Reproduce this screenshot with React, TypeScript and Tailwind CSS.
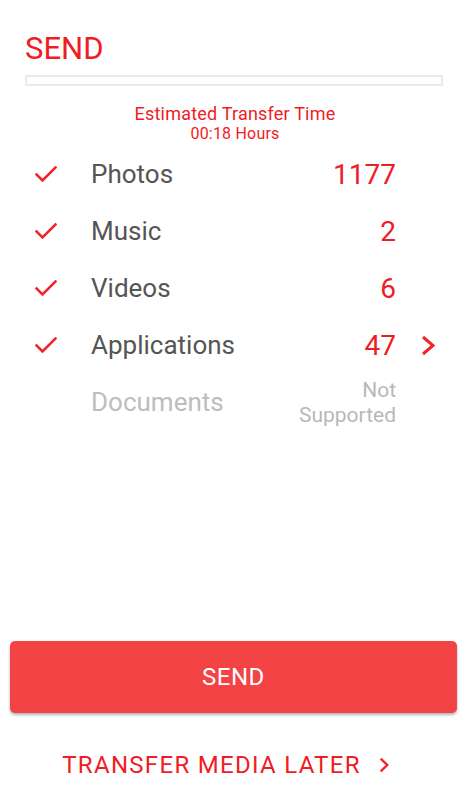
import React from "react";

const RED = "text-[#f01c24]";

function Check() {
  return (
    <svg width="22" height="17" viewBox="0 0 22 17" fill="none">
      <path d="M1.5 8.5 L7.5 14.5 L20.5 1.5" stroke="#f0242c" strokeWidth="2.6" strokeLinecap="square" />
    </svg>
  );
}

function Chevron({ w = 14, h = 21, sw = 3 }: { w?: number; h?: number; sw?: number }) {
  return (
    <svg width={w} height={h} viewBox={`0 0 ${w} ${h}`} fill="none">
      <path d={`M${sw / 2 + 0.5} ${sw / 2 + 0.5} L${w - sw / 2 - 0.5} ${h / 2} L${sw / 2 + 0.5} ${h - sw / 2 - 0.5}`} stroke="#f0242c" strokeWidth={sw} />
    </svg>
  );
}

type Row = { label: string; value?: string; checked: boolean; chevron?: boolean; disabled?: boolean };

const rows: Row[] = [
  { label: "Photos", value: "1177", checked: true },
  { label: "Music", value: "2", checked: true },
  { label: "Videos", value: "6", checked: true },
  { label: "Applications", value: "47", checked: true, chevron: true },
  { label: "Documents", checked: false, disabled: true },
];

export default function App() {
  return (
    <div className="w-[470px] min-h-[800px] bg-white flex flex-col" style={{ fontFamily: "Roboto, 'Noto Sans', sans-serif" }}>
      <div className="px-[25px] pt-[33px]">
        <div className={`text-[31px] leading-[31px] ${RED}`}>SEND</div>
        <div className="mt-[11px] h-[11px] w-[418px] border-2 border-[#ebebe6]" />
      </div>
      <div className={`mt-[18px] flex flex-col items-center ${RED}`}>
        <div className="text-[18px] leading-[20px] tracking-[0.2px]">Estimated Transfer Time</div>
        <div className="text-[16px] leading-[19px] tracking-[0.2px]">00:18 Hours</div>
      </div>
      <div className="mt-[3px] flex flex-col">
        {rows.map((r) => (
          <div key={r.label} className="h-[57px] flex items-center pl-[35px]">
            <div className="w-[22px] flex items-center">{r.checked && <Check />}</div>
            <div className={`ml-[34px] flex-1 text-[26px] ${r.disabled ? "text-[#bdbdbd]" : "text-[#555555]"}`}>{r.label}</div>
            <div className="w-[150px] flex justify-end">
              {r.value ? (
                <span className={`text-[28px] ${RED}`}>{r.value}</span>
              ) : (
                <span className="text-[21px] leading-[25px] text-[#b8b8b8] text-right">
                  Not
                  <br />
                  Supported
                </span>
              )}
            </div>
            <div className="w-[74px] pl-[25px] flex items-center">{r.chevron && <Chevron />}</div>
          </div>
        ))}
      </div>
      <div className="flex-1" />
      <div className="pl-[10px] pr-[13px]">
        <div className="h-[72px] rounded-[5px] bg-[#f44345] shadow-[0_2px_3px_rgba(0,0,0,0.3)] flex items-center justify-center">
          <span className="text-white text-[24px] tracking-[0.5px]">SEND</span>
        </div>
      </div>
      <div className={`h-[87px] pt-[16px] pr-[19px] flex items-center justify-center gap-[18px] ${RED}`}>
        <span className="text-[24px] tracking-[1.3px]">TRANSFER MEDIA LATER</span>
        <Chevron w={10} h={16} sw={2.4} />
      </div>
    </div>
  );
}
